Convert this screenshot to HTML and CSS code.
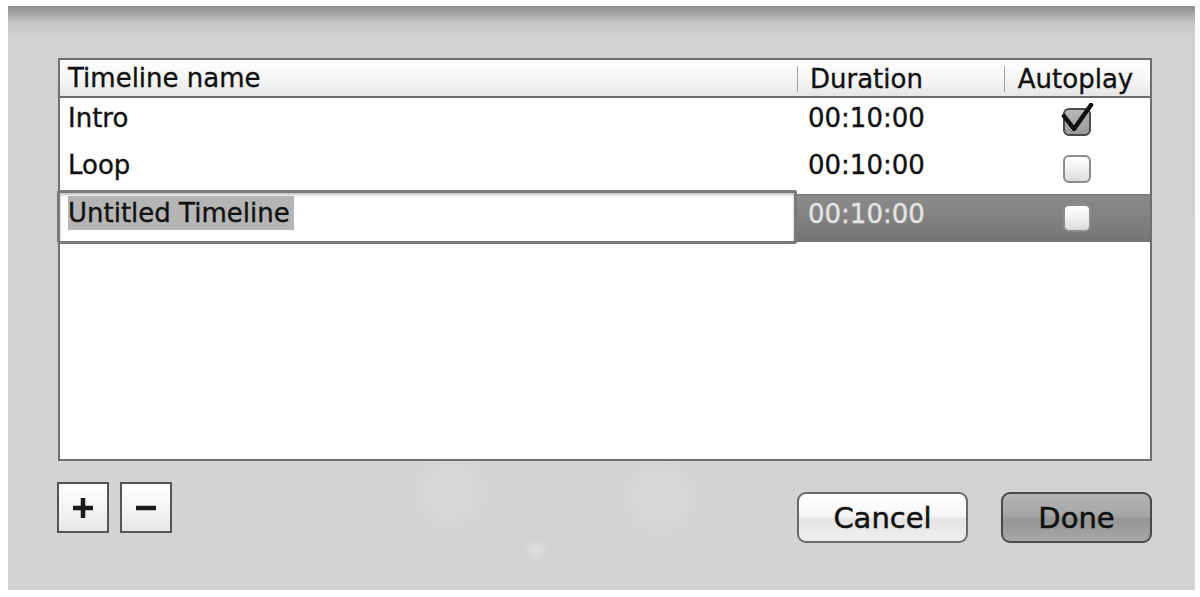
FILE: index.html
```html
<!DOCTYPE html>
<html>
<head>
<meta charset="utf-8">
<link rel="stylesheet" href="styles.css">
</head>
<body>
<div class="window">
  <div class="table">
    <div class="thead">
      <div class="th th-name">Timeline name</div>
      <div class="th th-dur">Duration</div>
      <div class="th th-auto">Autoplay</div>
    </div>
    <div class="row">
      <div class="cell name">Intro</div>
      <div class="cell dur">00:10:00</div>
      <div class="cell auto">
        <span class="check checked">
          <svg class="tick" width="34" height="32" viewBox="0 0 34 32"><path d="M3 13 L13 26 L30 2" fill="none" stroke="#111" stroke-width="4.5" stroke-linecap="round" stroke-linejoin="round"/></svg>
        </span>
      </div>
    </div>
    <div class="row">
      <div class="cell name">Loop</div>
      <div class="cell dur">00:10:00</div>
      <div class="cell auto"><span class="check"></span></div>
    </div>
    <div class="row selected">
      <div class="cell name edit"><span class="sel">Untitled Timeline</span></div>
      <div class="cell dur">00:10:00</div>
      <div class="cell auto"><span class="check"></span></div>
    </div>
  </div>
  <div class="bottom">
    <div class="pm">
      <button class="sq">
        <svg width="24" height="24" viewBox="0 0 24 24"><path d="M12 2 V22 M2 12 H22" stroke="#1a1a1a" stroke-width="4.5"/></svg>
      </button>
      <button class="sq">
        <svg width="24" height="24" viewBox="0 0 24 24"><path d="M2 12 H22" stroke="#1a1a1a" stroke-width="4.5"/></svg>
      </button>
    </div>
    <div class="actions">
      <button class="btn cancel">Cancel</button>
      <button class="btn done">Done</button>
    </div>
  </div>
</div>
</body>
</html>
```
FILE: styles.css
```css
html, body {
  margin: 0;
  padding: 0;
  background: #ffffff;
}
body {
  width: 1200px;
  height: 597px;
  overflow: hidden;
  font-family: "DejaVu Sans", Verdana, sans-serif;
  color: #111;
  -webkit-text-stroke: 0.35px currentColor;
}
.window {
  box-sizing: border-box;
  margin: 6px 5px 0 8px;
  height: 584px;
  padding: 52px 43px 0 50px;
  background:
    radial-gradient(circle at 442px 485px, rgba(255,255,255,0.12) 0, rgba(255,255,255,0.08) 30px, rgba(255,255,255,0) 42px),
    radial-gradient(circle at 652px 490px, rgba(255,255,255,0.14) 0, rgba(255,255,255,0.08) 30px, rgba(255,255,255,0) 42px),
    radial-gradient(circle at 528px 545px, rgba(255,255,255,0.3) 0, rgba(255,255,255,0) 12px),
    linear-gradient(to bottom, #8d8d8d 0px, #a9a9a9 8px, #c6c6c6 18px, #d2d2d2 30px, #d3d3d3 100%);
}
.table {
  box-sizing: border-box;
  height: 403px;
  border: 2px solid #6f6f6f;
  background: #ffffff;
}
.thead {
  display: grid;
  grid-template-columns: 737px 207px 1fr;
  height: 36px;
  border-bottom: 2px solid #6a6a6a;
  background: linear-gradient(to bottom, #ffffff 0%, #f6f6f6 50%, #e6e6e6 100%);
}
.th {
  font-size: 26px;
  line-height: 36px;
  white-space: nowrap;
}
.th-name {
  padding-left: 8px;
}
.th-dur, .th-auto {
  margin: 6px 0 4px;
  line-height: 26px;
  border-left: 1px solid #a0a0a0;
}
.th-dur {
  padding-left: 12px;
}
.th-auto {
  text-align: center;
  padding-right: 4px;
}
.row {
  display: grid;
  grid-template-columns: 737px 207px 1fr;
  height: 47px;
}
.cell {
  box-sizing: border-box;
  font-size: 26px;
  line-height: 41px;
  padding-bottom: 6px;
  white-space: nowrap;
}
.name {
  padding-left: 8px;
}
.dur {
  padding-left: 11px;
}
.auto {
  display: flex;
  justify-content: center;
  align-items: flex-start;
  padding: 10px 0 0 0;
}
.check {
  position: relative;
  box-sizing: border-box;
  width: 28px;
  height: 28px;
  border: 2px solid #8c8c8c;
  border-radius: 6px;
  background: linear-gradient(to bottom, #ffffff 0%, #f0f0f0 50%, #dcdcdc 100%);
}
.check.checked {
  border-color: #4a4a4a;
  background: linear-gradient(to bottom, #b8b8b8 0%, #9a9a9a 100%);
}
.tick {
  position: absolute;
  left: -4px;
  top: -7px;
}
.row.selected {
  margin-top: 2px;
  height: 45px;
}
.row.selected .dur,
.row.selected .auto {
  background: linear-gradient(to bottom, #707070 0px, #8a8a8a 2px, #828282 50%, #747474 100%);
  color: #e4e4e4;
}
.row.selected .cell {
  line-height: 35px;
  padding-bottom: 10px;
}
.row.selected .dur {
  line-height: 41px;
  padding-bottom: 4px;
}
.row.selected .auto {
  padding: 10px 0 0 0;
}
.edit {
  box-sizing: border-box;
  margin: -4px 0 -2px -3px;
  padding: 3px 0 0 8px;
  border: 3px solid #7a7a7a;
  border-radius: 2px;
  background: #ffffff;
  box-shadow: inset 0 2px 3px rgba(0,0,0,0.25);
}
.edit .sel {
  display: inline-block;
  background: #b5b5b5;
  line-height: 34px;
  padding-right: 4px;
}
.bottom {
  display: flex;
  justify-content: space-between;
  align-items: flex-start;
}
.pm {
  display: flex;
  gap: 11px;
  margin: 21px 0 0 -1px;
}
.sq {
  box-sizing: border-box;
  width: 52px;
  height: 51px;
  padding: 0;
  display: flex;
  align-items: center;
  justify-content: center;
  border: 2px solid #555;
  background: linear-gradient(to bottom, #ffffff 0%, #f4f4f4 50%, #e6e6e6 100%);
}
.actions {
  display: flex;
  gap: 33px;
  margin-top: 31px;
}
.btn {
  box-sizing: border-box;
  height: 51px;
  font-family: "DejaVu Sans", Verdana, sans-serif;
  font-size: 29px;
  color: #111;
  -webkit-text-stroke: 0.5px #111;
  padding: 0;
  border-radius: 9px;
  border: 2px solid #6a6a6a;
}
.cancel {
  width: 171px;
  background: linear-gradient(to bottom, #ffffff 0%, #f6f6f6 45%, #e4e4e4 55%, #f0f0f0 100%);
}
.done {
  width: 151px;
  border-color: #4a4a4a;
  background: linear-gradient(to bottom, #b4b4b4 0%, #a6a6a6 45%, #959595 55%, #a8a8a8 100%);
}
```
